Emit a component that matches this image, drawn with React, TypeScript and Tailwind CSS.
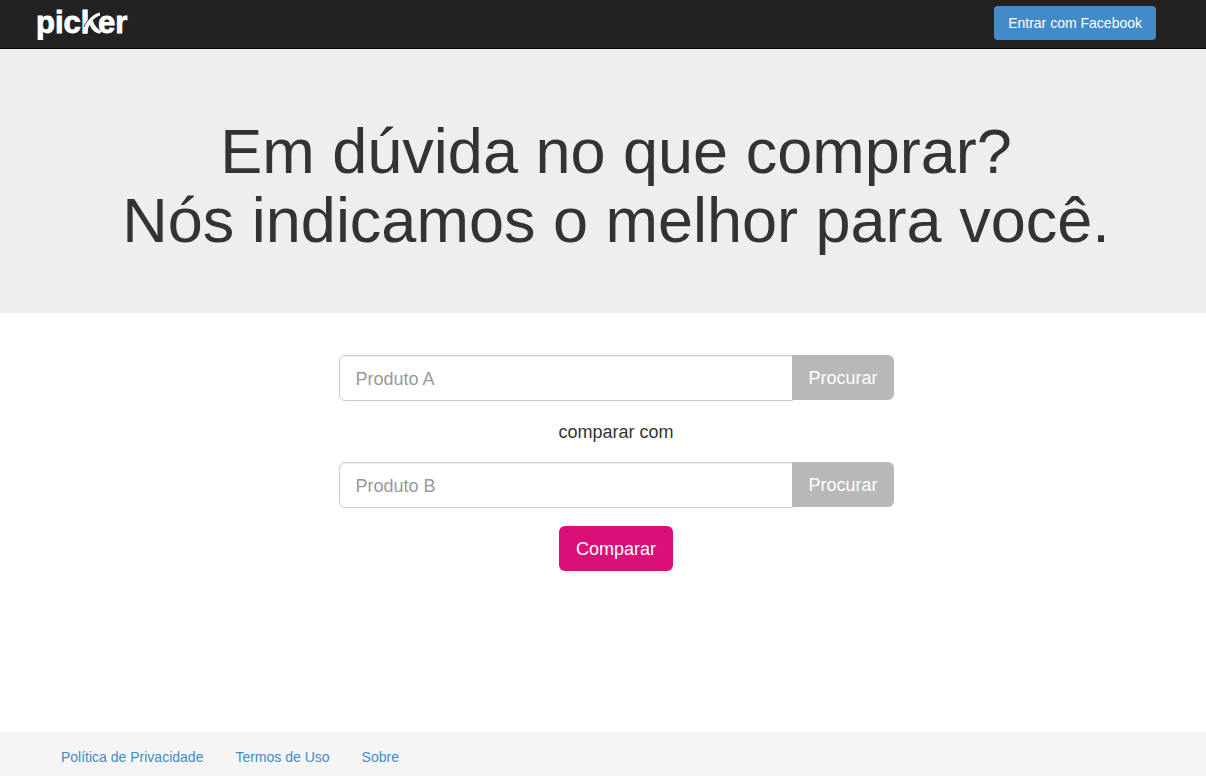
function Logo() {
  return (
    <a href="#" aria-label="picker" className="block">
      <svg width="94" height="40" viewBox="0 0 94 40" aria-hidden="true">
        <text
          x="0"
          y="33"
          fill="#fff"
          stroke="#fff"
          strokeWidth="0.9"
          fontSize="31"
          fontWeight="700"
          fontFamily="'Liberation Sans', Arial, sans-serif"
        >
          picker
        </text>
        <rect x="52" y="12" width="10.5" height="22" fill="#222" />
        <path d="M61 12.500 C56 15 51 20 48 27" fill="none" stroke="#222" strokeWidth="1" />
        <path d="M64 12.500 C57 14 50 20 46.500 33.500 L51 33.500 C52 25 57 17.500 64 15.500 Z" fill="#fff" />
        <path d="M53 23 L56.500 19.500 C58 25 61 29 66 31 L64 33.500 C58 33 55 29 53 23 Z" fill="#fff" />
      </svg>
    </a>
  );
}

function ProductSearch({ label }: { label: string }) {
  return (
    <div className="flex items-start">
      <input
        type="text"
        aria-label={label}
        placeholder={label}
        className="h-[46px] min-w-0 flex-1 rounded-l-md border border-[#ccc] bg-white px-4 pt-[2px] text-lg text-[#555] shadow-[inset_0_1px_1px_rgba(0,0,0,0.075)] placeholder:text-[#999]"
      />
      <button type="button" className="-ml-px h-[45px] rounded-r-md bg-[#b8b8b8] px-4 text-lg text-white">
        Procurar
      </button>
    </div>
  );
}

export default function App() {
  return (
    <div className="flex min-h-screen flex-col bg-white font-['Liberation_Sans',Arial,sans-serif] text-[#333]">
      <header className="flex h-[49px] items-start justify-between border-b border-[#080808] bg-[#222] pr-[50px] pl-9">
        <Logo />
        <button type="button" className="mt-[6px] h-[34px] rounded bg-[#428bca] px-[14px] text-sm text-white">
          Entrar com Facebook
        </button>
      </header>

      <section className="bg-[#eee] pt-[68px] pb-[58px] pl-[26px]">
        <h1 className="text-center text-[63px] leading-[69px]">
          Em dúvida no que comprar?
          <br />
          Nós indicamos o melhor para você.
        </h1>
      </section>

      <main className="flex-1 pt-[42px] pb-10 pl-[26px]">
        <form className="mx-auto flex max-w-[555px] flex-col" onSubmit={(e) => e.preventDefault()}>
          <ProductSearch label="Produto A" />
          <p className="pt-[19px] pb-[17px] text-center text-lg leading-[25px] text-[#333]">comparar com</p>
          <ProductSearch label="Produto B" />
          <button type="submit" className="mt-[18px] h-[45px] self-center rounded-md bg-[#da0f78] px-[17px] text-lg text-white">
            Comparar
          </button>
        </form>
      </main>

      <footer className="bg-[#f5f5f5] px-[61px] pt-[15px] pb-[9px]">
        <nav className="flex gap-8 text-sm text-[#428bca]">
          <a href="#privacidade">Política de Privacidade</a>
          <a href="#termos">Termos de Uso</a>
          <a href="#sobre">Sobre</a>
        </nav>
      </footer>
    </div>
  );
}
